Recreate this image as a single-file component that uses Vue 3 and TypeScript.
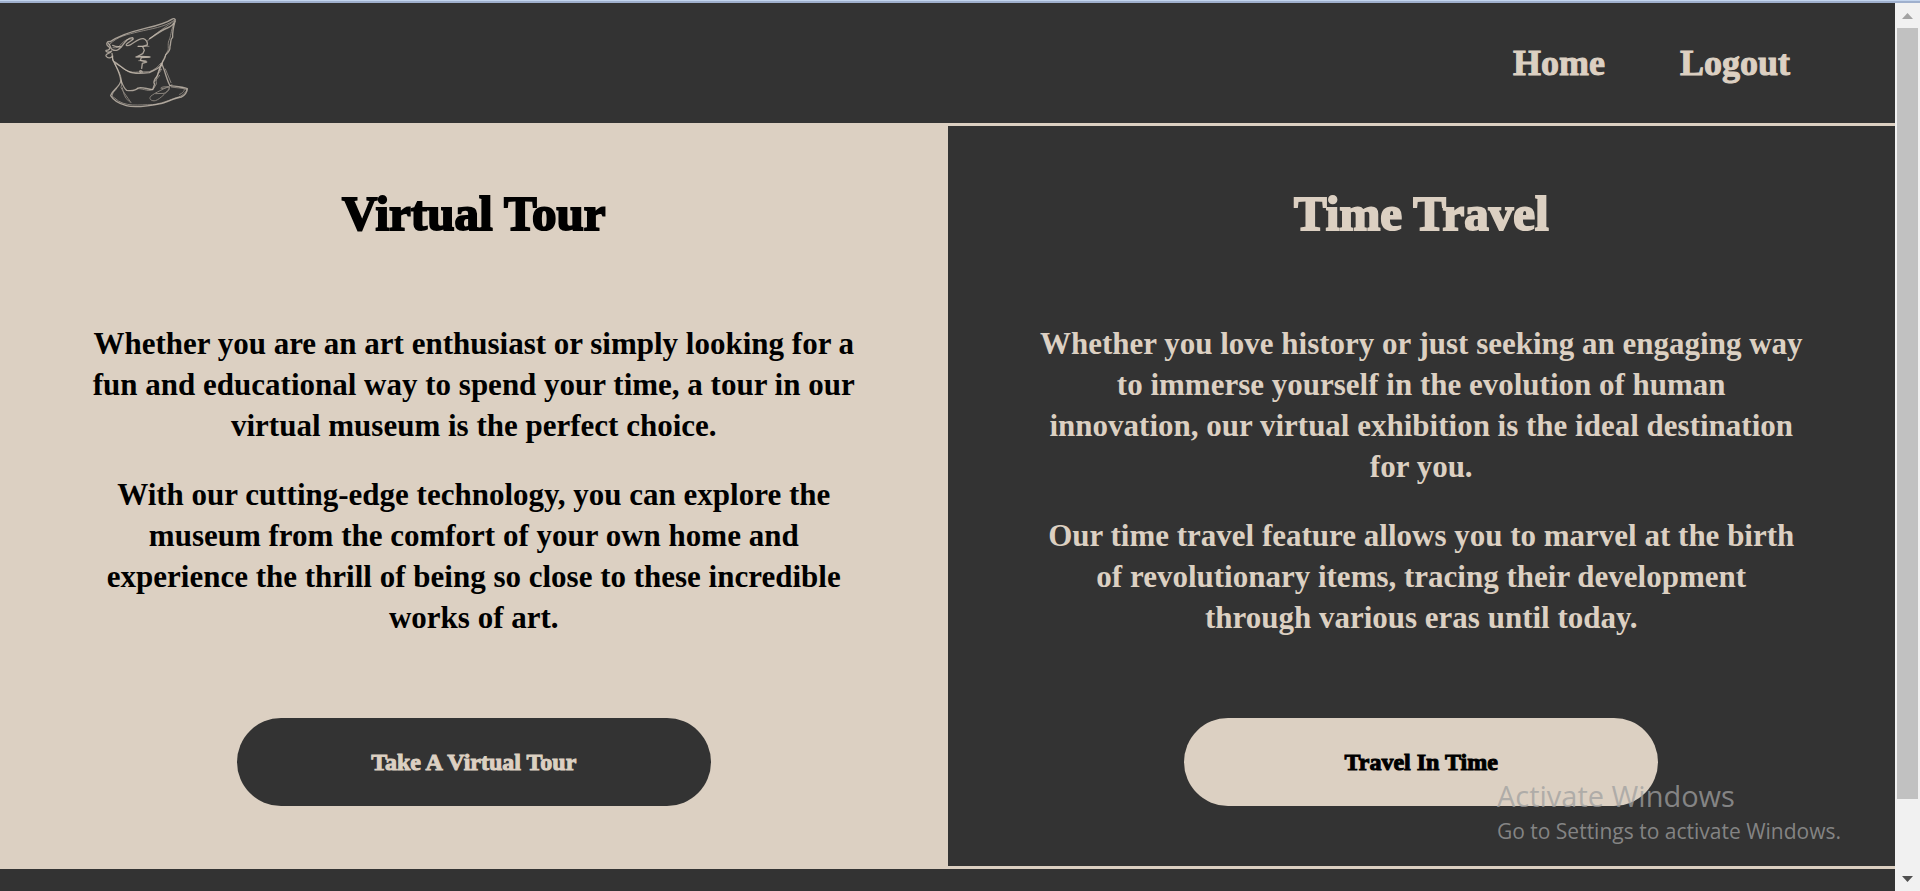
<script setup lang="ts">
interface Feature {
  id: string
  title: string
  paragraphs: string[]
  action: string
  tone: 'light' | 'dark'
}

const links: { label: string; href: string }[] = [
  { label: 'Home', href: '#home' },
  { label: 'Logout', href: '#logout' },
]

const features: Feature[] = [
  {
    id: 'tour',
    title: 'Virtual Tour',
    paragraphs: [
      'Whether you are an art enthusiast or simply looking for a\nfun and educational way to spend your time, a tour in our\nvirtual museum is the perfect choice.',
      'With our cutting-edge technology, you can explore the\nmuseum from the comfort of your own home and\nexperience the thrill of being so close to these incredible\nworks of art.',
    ],
    action: 'Take A Virtual Tour',
    tone: 'light',
  },
  {
    id: 'travel',
    title: 'Time Travel',
    paragraphs: [
      'Whether you love history or just seeking an engaging way\nto immerse yourself in the evolution of human\ninnovation, our virtual exhibition is the ideal destination\nfor you.',
      'Our time travel feature allows you to marvel at the birth\nof revolutionary items, tracing their development\nthrough various eras until today.',
    ],
    action: 'Travel In Time',
    tone: 'dark',
  },
]
</script>

<template>
  <div class="window">
    <div class="window-edge"></div>
    <div class="viewport">
      <div class="page">
        <header class="header">
          <a class="logo" href="#home" aria-label="Museum home">
            <svg viewBox="69 45 270 288" fill="none" stroke-linecap="round" stroke-linejoin="round">
              <g class="main-lines">
                <path d="M91 125C115 108 150 96 184 88C225 78 255 72 275 58C282 53 288 57 285 64C278 76 273 80 262 84C245 90 225 106 209 116" />
                <path d="M285 64C280 82 277 98 278 112C269 119 274 128 270 139C271 151 262 160 257 164C256 180 244 188 243 196C239 205 221 211 208 218C183 221 160 222 145 214C130 207 118 194 101 184C96 179 98 169 96 160" />
                <path d="M91 125C80 122 77 134 85 139C94 146 86 151 78 151C77 158 88 157 95 153C91 162 76 159 78 168C84 177 93 174 98 168" />
                <path d="M85 130C94 136 88 147 99 150C108 153 120 149 124 139C112 142 106 140 98 136" />
                <path d="M124 141C134 127 144 112 158 113C165 119 148 124 141 131C134 139 145 138 152 134C164 127 177 114 190 116C198 118 204 127 202 135L188 139H174" />
                <path d="M188 140L193 151L189 160C181 164 174 170 168 171L185 169L210 171L184 173L181 181L200 186L187 190L185 205" />
                <path d="M181 217C175 211 187 209 186 217" />
                <path d="M101 184C112 208 123 225 122 244C117 263 97 270 92 287C99 299 117 311 139 317C166 325 207 318 247 310C268 303 285 294 304 291C315 287 322 275 322 266C305 258 287 259 270 257C261 242 256 216 246 193" />
                <path d="M122 239C127 251 131 265 140 271C156 273 169 270 174 264C184 260 197 266 218 269L224 252C218 247 225 235 233 226C237 213 239 203 247 190" />
              </g>
              <g class="fine-lines">
                <path d="M89 133C114 108 141 104 177 95C214 86 252 82 281 62" />
                <path d="M283 62C263 78 225 100 202 123" />
                <path d="M281 71C272 95 273 109 267 121C261 135 269 148 261 156C256 171 246 180 244 196" />
                <path d="M99 143C109 145 116 142 121 135C136 118 146 116 158 117" />
                <path d="M98 169C95 188 105 190 120 198C136 213 151 219 175 216L208 215C223 210 235 200 242 190" />
                <path d="M104 192C121 219 129 240 123 263C131 278 142 291 153 308M127 263C132 290 139 297 148 305" />
                <path d="M111 265C98 277 91 289 104 294C134 324 181 313 217 314C250 310 269 299 289 293C307 289 316 278 321 269C307 263 288 264 274 261" />
                <path d="M243 192C236 214 227 230 229 252L221 266C206 278 193 265 173 266" />
                <path d="M276 254C252 267 226 277 212 289C205 298 216 304 226 302C240 298 267 271 269 261L245 266C235 264 253 258 267 260M227 281L252 280C264 275 271 269 267 263" />
                <path d="M175 139H207M173 171H207M176 182H198M239 209L245 207L239 217M225 244L239 226" />
                <path d="M299 262C325 263 309 280 299 283M256 207L273 248" />
              </g>
            </svg>
          </a>
          <nav class="nav">
            <a v-for="link in links" :key="link.label" :href="link.href">{{ link.label }}</a>
          </nav>
        </header>
        <main class="features">
          <section v-for="feature in features" :key="feature.id" class="feature" :class="feature.tone">
            <h2>{{ feature.title }}</h2>
            <div class="copy">
              <p v-for="paragraph in feature.paragraphs" :key="paragraph">{{ paragraph }}</p>
            </div>
            <button type="button">{{ feature.action }}</button>
          </section>
        </main>
        <footer class="footer"></footer>
      </div>
      <div class="scrollbar" aria-hidden="true">
        <svg class="arrow up" viewBox="0 0 25 25"><path d="M7 16L12.500 10L18 16Z" /></svg>
        <div class="track"><div class="thumb"></div></div>
        <svg class="arrow down" viewBox="0 0 25 25"><path d="M7 10L12.500 16L18 10Z" /></svg>
      </div>
    </div>
    <aside class="activation">
      <strong>Activate Windows</strong>
      <span>Go to Settings to activate Windows.</span>
    </aside>
  </div>
</template>

<style>
body {
  margin: 0;
}
</style>

<style scoped>
.window {
  --ink: #333333;
  --sand: #dcd0c2;
  position: relative;
  display: flex;
  flex-direction: column;
  min-height: 100vh;
  font-family: "Liberation Serif", "Times New Roman", serif;
  font-weight: 700;
}

.window-edge {
  height: 1px;
  background: #c3d5ee;
  border-bottom: 2px solid #9fb0cd;
}

.viewport {
  flex: 1;
  display: grid;
  grid-template-columns: 1fr 25px;
}

.page {
  display: flex;
  flex-direction: column;
  background: var(--ink);
}

.header {
  display: flex;
  align-items: center;
  justify-content: space-between;
  height: 120px;
  padding: 0 105px 0 103px;
  border-bottom: 3px solid var(--sand);
}

.logo,
.logo svg {
  display: block;
  width: 90px;
  height: 96px;
}

.logo svg {
  stroke: var(--sand);
}

.main-lines {
  stroke-width: 4;
  opacity: 0.7;
}

.fine-lines {
  stroke-width: 3;
  opacity: 0.5;
}

.nav {
  display: flex;
  gap: 75px;
}

.nav a {
  color: var(--sand);
  font-size: 36px;
  line-height: 44px;
  text-decoration: none;
  -webkit-text-stroke: 1px var(--sand);
}

.features {
  display: grid;
  grid-template-columns: 1fr 1fr;
  border-bottom: 3px solid var(--sand);
}

.feature {
  display: flex;
  flex-direction: column;
  align-items: center;
  padding: 58px 0 60px;
  text-align: center;
}

.light {
  background: var(--sand);
  color: #000000;
}

.dark {
  background: var(--ink);
  color: var(--sand);
}

h2 {
  margin: 0 0 79px;
  font-size: 49px;
  line-height: 60px;
  -webkit-text-stroke: 2px currentColor;
}

.copy {
  display: flex;
  flex-direction: column;
  gap: 28px;
  width: 84%;
  margin-bottom: 80px;
  font-size: 31px;
  line-height: 41px;
}

.copy p {
  margin: 0;
  white-space: pre-line;
}

button {
  width: 50%;
  height: 88px;
  border: 0;
  border-radius: 50px;
  font: inherit;
  font-size: 24px;
  -webkit-text-stroke: 1px currentColor;
}

.light button {
  background: var(--ink);
  color: var(--sand);
}

.dark button {
  background: var(--sand);
  color: #000000;
}

.footer {
  flex: 1;
  min-height: 22px;
}

.scrollbar {
  display: flex;
  flex-direction: column;
  background: #f1f1f1;
}

.arrow {
  width: 25px;
  height: 25px;
}

.up {
  fill: #a3a3a3;
}

.down {
  fill: #505050;
}

.track {
  flex: 1;
  padding: 0 2px;
}

.thumb {
  height: 92%;
  background: #c1c1c1;
}

.activation {
  position: absolute;
  right: 79px;
  bottom: 45px;
  display: flex;
  flex-direction: column;
  color: rgba(160, 160, 160, 0.75);
  font-family: "Open Sans", "Noto Sans", sans-serif;
  font-weight: 400;
  pointer-events: none;
}

.activation strong {
  font-size: 29px;
  font-weight: 400;
  line-height: 40px;
}

.activation span {
  font-size: 21px;
  line-height: 30px;
}
</style>
